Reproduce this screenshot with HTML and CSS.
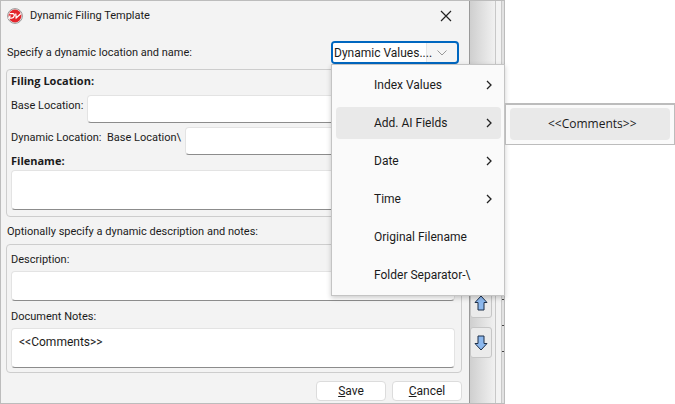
FILE: index.html
```html
<!DOCTYPE html>
<html lang="en">
<head>
    <meta charset="UTF-8">
    <meta name="viewport" content="width=device-width, initial-scale=1.0">
    <title>Dynamic Filing Template</title>
    <link rel="stylesheet" href="styles.css">
</head>

<body>
    <div class="window">
        <form class="dialog">
            <header class="titlebar">
                <svg class="logo" viewBox="0 0 16 16">
                    <circle cx="8" cy="8" r="7.4" fill="#eee" stroke="#999" />
                    <circle cx="8" cy="8" r="6.4" fill="#e3242b" />
                    <path d="M2.500 5.700H6C8.300 5.700 7.300 10.200 4.800 10.200H2L3.300 7.500M8.700 5.500L9.200 10L14 5.500" fill="none" stroke="#fff" stroke-width="1.300" />
                </svg>
                <h1>Dynamic Filing Template</h1>
                <button type="button" class="close" aria-label="Close">
                    <svg viewBox="0 0 12 12"><path d="M1 1l10 10M11 1L1 11" /></svg>
                </button>
            </header>

            <div class="intro">
                <span>Specify a dynamic location and name:</span>
                <div class="combo">
                    <button type="button" class="combo-button" aria-haspopup="menu">
                        <span class="combo-text">Dynamic Values....</span>
                        <span class="combo-arrow">
                            <svg viewBox="0 0 10 6"><path d="M0.500 0.500L5 5L9.500 0.500" /></svg>
                        </span>
                    </button>

                    <!-- drop-down menu -->
                    <ul class="menu">
                        <li><button type="button">Index Values <svg viewBox="0 0 6 10"><path d="M1 1L5 5L1 9" /></svg></button></li>
                        <li>
                            <button type="button" class="active">Add. AI Fields <svg viewBox="0 0 6 10"><path d="M1 1L5 5L1 9" /></svg></button>
                            <ul class="submenu">
                                <li><button type="button" class="active">&lt;&lt;Comments&gt;&gt;</button></li>
                            </ul>
                        </li>
                        <li><button type="button">Date <svg viewBox="0 0 6 10"><path d="M1 1L5 5L1 9" /></svg></button></li>
                        <li><button type="button">Time <svg viewBox="0 0 6 10"><path d="M1 1L5 5L1 9" /></svg></button></li>
                        <li><button type="button">Original Filename</button></li>
                        <li><button type="button">Folder Separator-\</button></li>
                    </ul>
                </div>
            </div>

            <section class="group">
                <h2>Filing Location:</h2>
                <div class="row">
                    <label for="base">Base Location:</label>
                    <input type="text" id="base">
                </div>
                <div class="row">
                    <label for="dynamic">Dynamic Location: &nbsp;Base Location\</label>
                    <input type="text" id="dynamic">
                </div>
                <label class="strong" for="filename">Filename:</label>
                <textarea id="filename"></textarea>
            </section>

            <p class="optional">Optionally specify a dynamic description and notes:</p>

            <section class="group notes">
                <label for="description">Description:</label>
                <input type="text" id="description">
                <label for="notes">Document Notes:</label>
                <textarea id="notes">&lt;&lt;Comments&gt;&gt;</textarea>
            </section>

            <footer class="actions">
                <button type="submit"><u>S</u>ave</button>
                <button type="button"><u>C</u>ancel</button>
            </footer>
        </form>

        <!-- part of the parent window -->
        <div class="side">
            <button type="button" aria-label="Move up">
                <svg viewBox="0 0 14 16"><path d="M7 1L13 7.500H10V15H4V7.500H1Z" /></svg>
            </button>
            <button type="button" aria-label="Move down">
                <svg viewBox="0 0 14 16"><path d="M7 15L13 8.500H10V1H4V8.500H1Z" /></svg>
            </button>
        </div>
        <div class="edge"><i></i><i></i><i></i></div>
    </div>
</body>
</html>
```
FILE: styles.css
```css
* {
    box-sizing: border-box;
}

body {
    margin: 0;
    background-color: #fff;
    font-family: Roboto, sans-serif;
    font-size: 11px;
    line-height: 16px;
    color: #1b1b1b;
}

button, input, textarea {
    font: inherit;
    color: inherit;
}

h1, h2, p, ul {
    margin: 0;
    padding: 0;
    font-size: inherit;
    font-weight: normal;
    list-style: none;
}

.window {
    display: flex;
    min-height: 100vh;
    margin-right: 170px;
    border: 1px solid #bcbcbc;
    background-color: #f3f3f3;
}

.dialog {
    flex: 1;
    display: flex;
    flex-direction: column;
    padding: 0 7px 1px 5px;
    border-right: 1px solid #999;
}

/* title */
.titlebar {
    display: flex;
    align-items: center;
    gap: 7px;
    height: 30px;
    padding-left: 1px;
}

.logo {
    width: 16px;
    height: 16px;
}

.close {
    width: 32px;
    height: 30px;
    margin-left: auto;
    padding: 0;
    border: 0;
    background: none;
}

.close svg {
    display: block;
    width: 12px;
    height: 12px;
    margin: 0 auto;
    stroke: #222;
    stroke-width: 1.2;
}

.intro {
    display: flex;
    justify-content: space-between;
    align-items: center;
    margin-top: 10px;
    padding: 0 3px 0 1px;
}

/* drop-down */
.combo {
    position: relative;
    width: 128px;
    font-size: 12px;
}

.combo-button {
    display: flex;
    width: 100%;
    height: 23px;
    padding: 0;
    border: 2px solid #0067c0;
    border-radius: 4px;
    background-color: #f5f5f5;
}

.combo-text {
    width: 94px;
    height: 19px;
    padding-left: 1px;
    line-height: 20px;
    text-align: left;
    background-color: #fff;
    border-right: 1px solid #e5e5e5;
    border-radius: 2px 0 0 2px;
    white-space: nowrap;
}

.combo-arrow {
    flex: 1;
    align-self: center;
    display: flex;
    justify-content: center;
}

.combo-arrow svg {
    width: 10px;
    height: 6px;
    fill: none;
    stroke: #999;
}

.menu {
    position: absolute;
    z-index: 1;
    top: 100%;
    left: 0;
    width: 174px;
    display: flex;
    flex-direction: column;
    gap: 6px;
    padding: 4px 3px 4px 4px;
    border: 1px solid #c4c4c4;
    background-color: #fafafa;
    box-shadow: 0 2px 5px rgba(0, 0, 0, 0.2);
}

.menu li {
    position: relative;
}

.menu button {
    display: flex;
    align-items: center;
    justify-content: space-between;
    width: 100%;
    height: 32px;
    padding: 0 9px 0 38px;
    border: 0;
    border-radius: 4px;
    background: none;
    white-space: nowrap;
}

.menu .active {
    background-color: #e9e9e9;
}

.menu svg {
    width: 6px;
    height: 10px;
    fill: none;
    stroke: #222;
    stroke-width: 1.3;
}

.menu .submenu {
    position: absolute;
    top: -4px;
    left: 169px;
    width: 170px;
    padding: 3px 4px 4px;
    border: 1px solid #bcbcbc;
    border-top-width: 2px;
    background-color: #fafafa;
    font-family: "Open Sans", sans-serif;
}

/* groups */
.group {
    display: flex;
    flex-direction: column;
    margin-top: 5px;
    padding: 3px 6px 6px 4px;
    border: 1px solid #cdcdcd;
    border-radius: 4px;
}

.group h2, .strong {
    font-family: "Open Sans", sans-serif;
    font-weight: bold;
}

.group h2 {
    margin-bottom: 6px;
}

.row {
    display: flex;
    align-items: center;
    gap: 4px;
}

.row + .row {
    margin-top: 4px;
}

.row label {
    padding-bottom: 6px;
    white-space: nowrap;
}

input, textarea {
    display: block;
    width: 100%;
    min-width: 0;
    margin: 0;
    border: 1px solid #e3e3e3;
    border-bottom-color: #8c8c8c;
    border-radius: 4px;
    background-color: #fff;
    outline: none;
}

input {
    height: 28px;
    padding: 0 7px;
}

textarea {
    height: 40px;
    padding: 5px 7px;
    font-size: 12px;
    resize: none;
    overflow: hidden;
}

.row input {
    flex: 1;
}

.strong {
    margin-bottom: 3px;
    line-height: 12px;
}

.optional {
    margin-top: 7px;
    padding-left: 1px;
}

.notes {
    margin-top: 4px;
    padding: 7px 6px 4px 4px;
}

.notes label {
    margin-bottom: 3px;
}

.notes input {
    height: 30px;
    margin-bottom: 8px;
}

/* bottom buttons */
.actions {
    display: flex;
    justify-content: flex-end;
    gap: 6px;
    margin-top: 8px;
}

.actions button {
    width: 70px;
    height: 20px;
    padding: 0;
    font-size: 12px;
    border: 1px solid #dcdcdc;
    border-radius: 4px;
    background-color: #fff;
}

.side {
    display: flex;
    flex-direction: column;
    justify-content: flex-end;
    gap: 9px;
    width: 26px;
    padding: 0 4px 45px 0;
    border-right: 1px solid #c8c8c8;
    background: linear-gradient(to right, #cfcfcf, #f1f1f1);
}

.side button {
    width: 22px;
    height: 31px;
    padding: 0;
    border: 1px solid #c6c6c6;
    border-radius: 3px;
    background-color: #ebebeb;
}

.side svg {
    display: block;
    width: 14px;
    height: 16px;
    margin: 0 auto;
    fill: #8cb8ee;
    stroke: #1d2f49;
}

.edge {
    display: flex;
    flex-direction: column;
    justify-content: flex-end;
    gap: 25px;
    width: 8px;
    padding-bottom: 51px;
    background: linear-gradient(to right, #f3f3f3 5px, #c8c8c8 5px, #c8c8c8 6px, #e2e2e2 6px);
}

.edge i {
    align-self: flex-end;
    width: 2px;
    height: 1px;
    background-color: #444;
}
```
